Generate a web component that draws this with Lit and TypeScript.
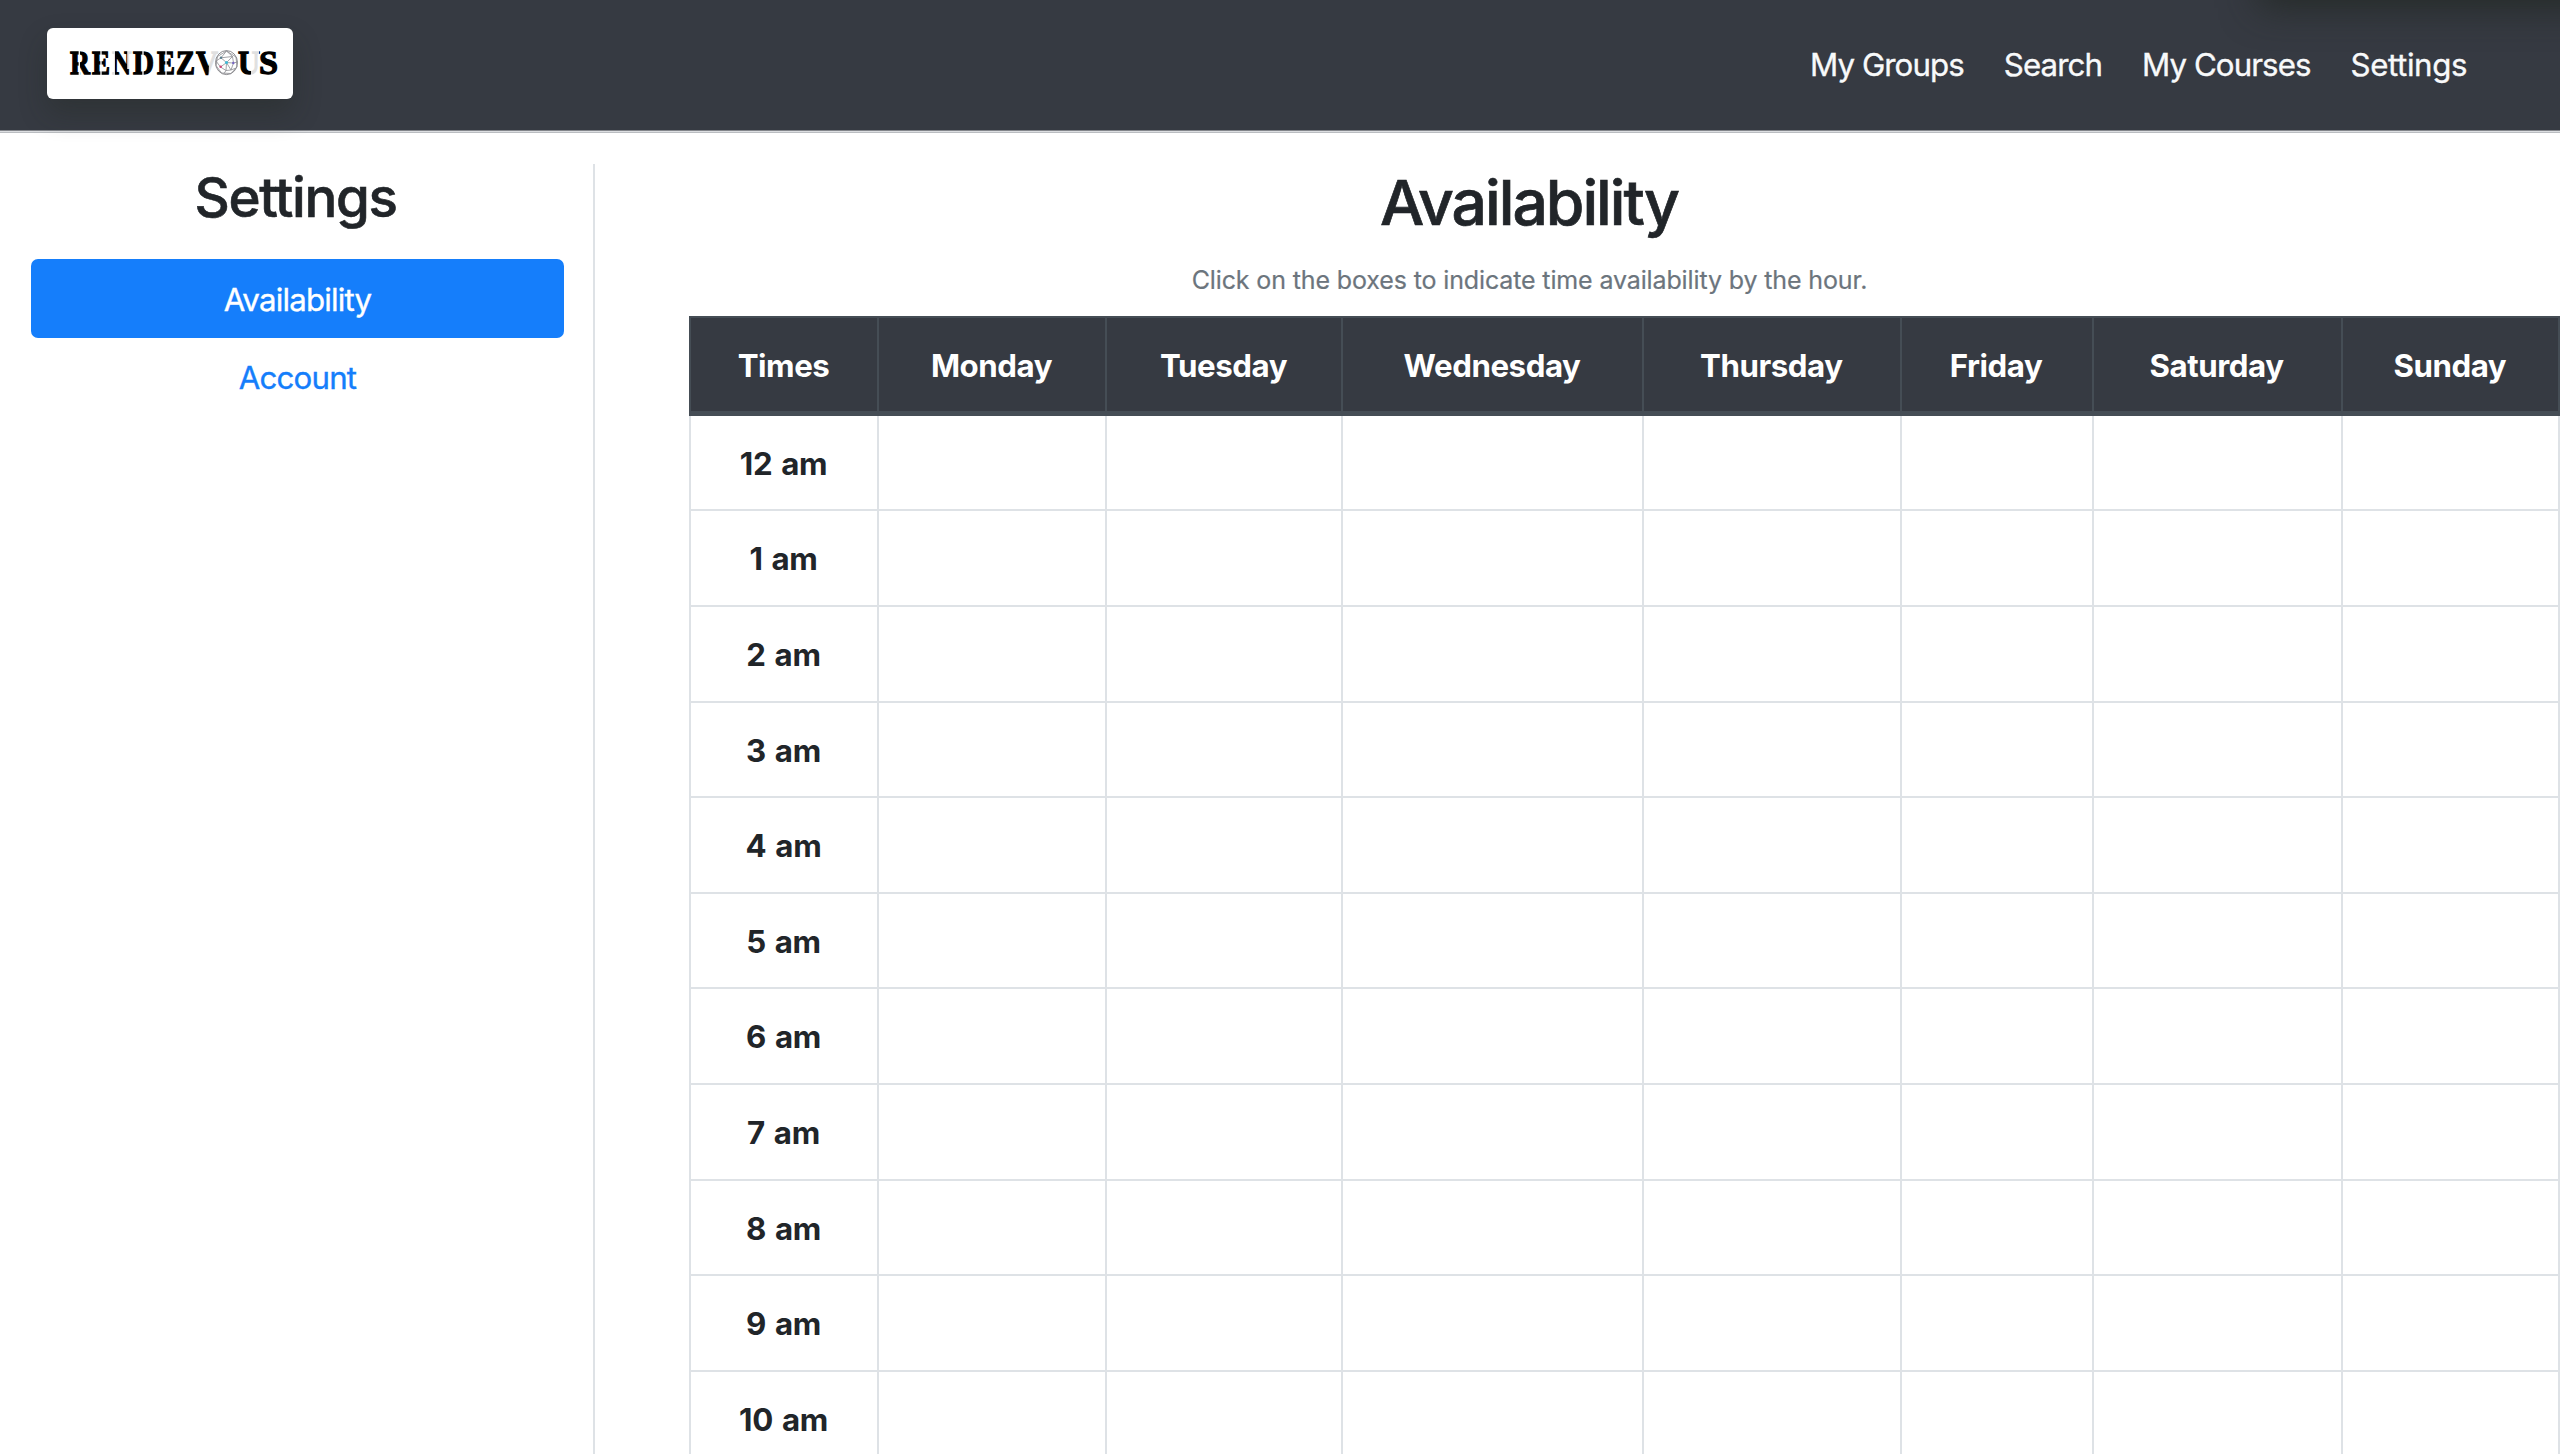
import { LitElement, html, css, svg } from "lit";
import { customElement } from "lit/decorators.js";

const NAV = ["My Groups", "Search", "My Courses", "Settings"];
const DAYS = ["Times", "Monday", "Tuesday", "Wednesday", "Thursday", "Friday", "Saturday", "Sunday"];
const HOURS = ["12 am", "1 am", "2 am", "3 am", "4 am", "5 am", "6 am", "7 am", "8 am", "9 am", "10 am"];

/** Wordmark letters with their left edge and drawn width. */
const LETTERS: [string, number, number][] = [
  ["R", 70, 20], ["E", 92, 18], ["N", 112, 19], ["D", 133, 21], ["E", 157, 18],
  ["Z", 176, 19], ["V", 196, 22], ["U", 238, 22], ["S", 259, 19],
];

@customElement("brand-logo")
export class BrandLogo extends LitElement {
  static styles = css`
    :host { display: block; }
    .card {
      display: block; width: 246px; height: 71px; margin-left: 47px; border-radius: 6px;
      background: #fff; box-shadow: 0 14px 28px rgba(32, 38, 28, 0.32);
    }
    .letter { font: bold 34px "Liberation Serif", serif; fill: #000; stroke: #000; stroke-width: 1.3px; }
  `;
  render() {
    return html`<svg class="card" viewBox="47 28 246 71" role="img">
      ${LETTERS.map(([c, x, w]) => svg`<text class="letter" x=${x} y="74.3" textLength=${w} lengthAdjust="spacingAndGlyphs">${c}</text>`)}
      <g stroke="#fff" stroke-width="1.3">
        <path d="M79.300 50v27M101 50v27M143 50v27M166 50v27" />
      </g>
      <g fill="#fff" fill-opacity="0.88">
        <path d="M110.500 50h4.500v27h-4.500zM127.200 50h4.600v19h-4.600zM251 50h8v27h-8z" />
        <path d="M209.500 50h10v6l-9 21h-2z" />
      </g>
      <circle cx="226.500" cy="62.600" r="12" fill="#fff" />
      <g fill="none" stroke="#8c8c90" stroke-width="0.8">
        <ellipse cx="226.500" cy="62.600" rx="11" ry="12" stroke="#6d6d72" />
        <path d="M226.500 51L217.500 56.500L216 65.500L221.500 73L231 73.500L237 67L236 57Z" />
        <path d="M226.500 62.600L221 57.800L226.500 51L232.500 56.500ZM226.500 62.600L220.500 67L216 61L221 57.800L232.500 56.500L233.500 63L237.500 62M226.500 62.600L233.500 63L231 70L226.500 62.600L226 70.500L220.500 67M226 70.500L231 70L236 68M226 70.500L224 73.500" />
      </g>
      <circle cx="226.500" cy="62.600" r="1.500" fill="#3ebbd8" />
      <circle cx="220.700" cy="66.800" r="1.300" fill="#cf4778" />
      <circle cx="221" cy="57.800" r="1.200" fill="#5b7f8f" />
      <circle cx="233.300" cy="63" r="1.200" fill="#7664c4" />
    </svg>`;
  }
}

@customElement("top-bar")
export class TopBar extends LitElement {
  static styles = css`
    :host { display: block; }
    .bar {
      display: flex; justify-content: space-between; align-items: flex-start; box-sizing: border-box;
      height: 133px; padding: 28px 93px 0 0; position: relative;
      background: linear-gradient(#363a42 130px, #83868b 130px 131px, #dcdee1 131px 132px, #babdc1 132px);
    }
    .links { display: flex; gap: 40px; padding-top: 14px; }
    .link {
      font: 400 31.250px/47px Inter, sans-serif; color: #f8f9fa; letter-spacing: -0.92px; white-space: nowrap;
      -webkit-text-stroke: 0.35px currentColor;
    }
    .link:last-child { letter-spacing: -0.4px; }
    .shade { position: absolute; top: 0; right: 0; width: 360px; height: 70px; overflow: hidden; }
    .shade::before {
      content: ""; position: absolute; left: 58px; right: -60px; top: -50px; height: 50px;
      box-shadow: 0 8px 36px rgba(32, 38, 32, 0.75);
    }
  `;
  render() {
    return html`<div class="bar">
      <div class="shade"></div>
      <brand-logo></brand-logo>
      <nav class="links">${NAV.map((n) => html`<a class="link">${n}</a>`)}</nav>
    </div>`;
  }
}

@customElement("settings-menu")
export class SettingsMenu extends LitElement {
  static styles = css`
    :host { display: block; }
    .menu {
      display: flex; flex-direction: column; box-sizing: border-box; width: 595px; height: 1290px;
      padding: 0 29px 0 31px; border-right: 2px solid #dee2e6; text-align: center;
    }
    .title {
      margin: 0; padding: 0 4px 29px 0; font: 500 54.700px/66px Inter, sans-serif; color: #212529; letter-spacing: -1.400px;
      -webkit-text-stroke: 0.6px currentColor;
    }
    .item {
      height: 78.500px; font: 400 31.250px/81.500px Inter, sans-serif; color: #157efb; letter-spacing: -0.8px; border-radius: 7px;
      -webkit-text-stroke: 0.35px currentColor;
    }
    .active { background: #157efb; color: #fff; line-height: 83px; }
  `;
  render() {
    return html`<aside class="menu">
      <h3 class="title">Settings</h3>
      <a class="item active">Availability</a>
      <a class="item">Account</a>
    </aside>`;
  }
}

@customElement("availability-table")
export class AvailabilityTable extends LitElement {
  static styles = css`
    :host { display: block; }
    .grid { width: 1871px; border-left: 2px solid #dee2e6; box-sizing: border-box; }
    .row {
      display: grid; grid-template-columns: 188px 228px 236px 301px 257.600px 192px 249px 217.400px;
      height: 95.620px; box-sizing: border-box; border-bottom: 2px solid #dee2e6;
    }
    .cell {
      border-right: 2px solid #dee2e6; text-align: center; box-sizing: border-box; padding-right: 1px;
      font: 700 31.250px/97px Inter, sans-serif; color: #212529; letter-spacing: -0.3px; word-spacing: 1.800px;
    }
    .head {
      height: 99.700px; margin-left: -2px; background: #363a42;
      border: solid #454d55; border-width: 2px 0 5px 2px;
    }
    .head .cell { color: #fff; border-color: #454d55; letter-spacing: -0.45px; }
  `;
  render() {
    return html`<div class="grid">
      <div class="row head">${DAYS.map((d) => html`<div class="cell">${d}</div>`)}</div>
      ${HOURS.map((h) => html`<div class="row">${DAYS.map((_, i) => html`<div class="cell">${i === 0 ? h : ""}</div>`)}</div>`)}
    </div>`;
  }
}

@customElement("app-root")
export class AppRoot extends LitElement {
  static styles = css`
    :host { display: block; width: 2560px; height: 1454px; overflow: hidden; background: #fff; }
    .body { display: flex; padding-top: 31px; gap: 94px; }
    .main { width: 1871px; flex: none; }
    .intro { display: flex; flex-direction: column; align-items: center; width: 1680px; height: 152px; }
    .title {
      margin: 0; font: 500 62.500px/76px Inter, sans-serif; color: #212529; letter-spacing: -2.050px;
      -webkit-text-stroke: 0.7px currentColor;
    }
    .hint {
      margin: 0; padding: 21px 0 0 1px; font: 400 25px/38px Inter, sans-serif; color: #6c757d; letter-spacing: -0.13px;
      -webkit-text-stroke: 0.2px currentColor;
    }
  `;
  render() {
    return html`<top-bar></top-bar>
      <div class="body">
        <settings-menu></settings-menu>
        <main class="main">
          <div class="intro">
            <h1 class="title">Availability</h1>
            <p class="hint">Click on the boxes to indicate time availability by the hour.</p>
          </div>
          <availability-table></availability-table>
        </main>
      </div>`;
  }
}
